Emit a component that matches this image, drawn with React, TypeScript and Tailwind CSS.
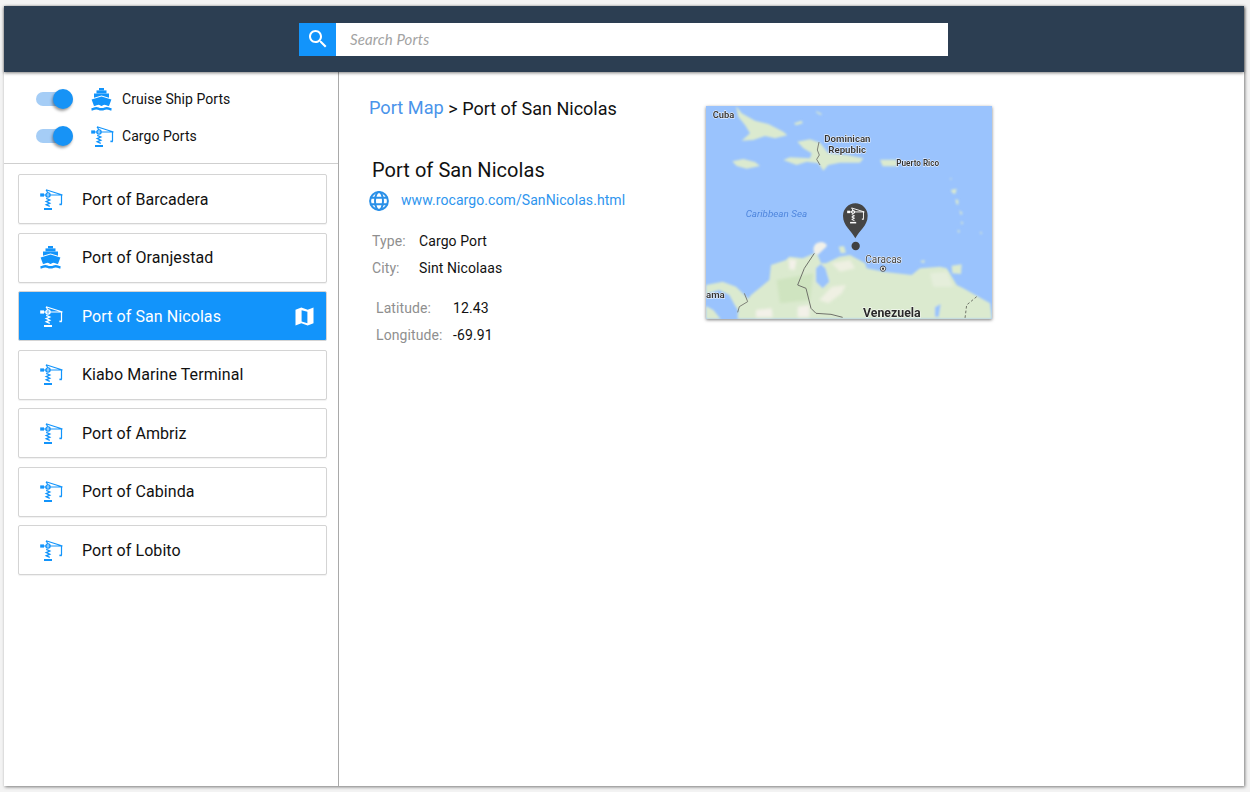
const PORTS = [
  { name: 'Port of Barcadera', type: 'cargo' },
  { name: 'Port of Oranjestad', type: 'cruise' },
  { name: 'Port of San Nicolas', type: 'cargo', active: true },
  { name: 'Kiabo Marine Terminal', type: 'cargo' },
  { name: 'Port of Ambriz', type: 'cargo' },
  { name: 'Port of Cabinda', type: 'cargo' },
  { name: 'Port of Lobito', type: 'cargo' },
];

function CraneShape({ stroke = 'currentColor' }: { stroke?: string }) {
  return (
    <g fill="none" stroke={stroke}>
      <path d="M2 6H22.5M6 0.8L22.5 6M8 4L6 0.8M21.5 6V15" strokeWidth="1.2" />
      <rect x="0.2" y="4.4" width="3.8" height="3.2" fill={stroke} stroke="none" />
      <circle cx="8" cy="6" r="2.1" strokeWidth="1.3" />
      <path d="M6.2 9.4L9.8 11L6.2 12.6L9.8 14.2L6.2 15.8L9.8 17.4" strokeWidth="1.3" />
      <path d="M4 20H12" strokeWidth="2" />
      <path d="M19.4 15.4H21.9" strokeWidth="1.6" />
    </g>
  );
}

function CraneIcon({ className = '' }: { className?: string }) {
  return (
    <svg viewBox="0 0 23 21" className={className}>
      <CraneShape />
    </svg>
  );
}

function ShipIcon({ className = '' }: { className?: string }) {
  return (
    <svg viewBox="0 0 21 23" className={className} fill="currentColor">
      <rect x="8" y="0" width="5" height="2.4" />
      <rect x="5.5" y="2.4" width="10" height="3" />
      <path d="M3 5.4H18V9.8L10.5 7.4L3 9.8Z" />
      <path d="M0.6 11.4L10.5 8.4L20.4 11.4L18 18C15.8 18 14.8 16.8 13.4 16.8C12.2 16.8 11.6 18 10.5 18C9.4 18 8.8 16.8 7.6 16.8C6.2 16.8 5.2 18 3 18Z" />
      <path d="M0.5 20C2.5 20 3 18.9 5.3 18.9C7.6 18.9 7.6 20 10.5 20C13.4 20 13.4 18.9 15.7 18.9C18 18.9 18.5 20 20.5 20V22.6C18.5 22.6 18 21.4 15.7 21.4C13.4 21.4 13.4 22.6 10.5 22.6C7.6 22.6 7.6 21.4 5.3 21.4C3 21.4 2.5 22.6 0.5 22.6Z" />
    </svg>
  );
}

function MapFoldIcon({ className = '' }: { className?: string }) {
  return (
    <svg viewBox="0 0 19 19" className={className} fill="currentColor" fillRule="evenodd">
      <path d="M0.5 2.8L6.3 0.6L12.7 2.8L18.5 0.6V16.2L12.7 18.4L6.3 16.2L0.5 18.4ZM6.6 3.2V14.4L12.4 16.2V4.8Z" />
    </svg>
  );
}

function GlobeIcon({ className = '' }: { className?: string }) {
  return (
    <svg viewBox="0 0 20 20" className={className} fill="none" stroke="currentColor" strokeWidth="2">
      <circle cx="10" cy="10" r="8.9" />
      <ellipse cx="10" cy="10" rx="4" ry="8.9" />
      <path d="M1.6 6.8H18.4M1.6 13.2H18.4" />
    </svg>
  );
}

function SearchIcon({ className = '' }: { className?: string }) {
  return (
    <svg viewBox="0 0 24 24" className={className} fill="currentColor">
      <path d="M15.5 14h-.79l-.28-.27C15.41 12.59 16 11.11 16 9.5 16 5.91 13.09 3 9.5 3S3 5.91 3 9.5 5.91 16 9.5 16c1.61 0 3.09-.59 4.23-1.57l.27.28v.79l5 4.99L20.49 19l-4.99-5zm-6 0C7.01 14 5 11.99 5 9.5S7.01 5 9.5 5 14 7.01 14 9.5 11.99 14 9.5 14z" />
    </svg>
  );
}

function Toggle() {
  return (
    <div className="relative w-[37px] h-[14px] rounded-full bg-[#a5cdf6]">
      <div className="absolute right-0 top-[-3px] w-[20px] h-[20px] rounded-full bg-[#1793f6] shadow-[-1px_2px_3px_rgba(0,0,0,0.4)]" />
    </div>
  );
}

// drawn in 3x coordinates, easier to read off the reference
function PortMap() {
  return (
    <svg viewBox="18 18 858 639" className="block w-[286px] h-[213px]">
      <defs>
        <filter id="soft" x="-5%" y="-5%" width="110%" height="110%">
          <feGaussianBlur stdDeviation="2.6" />
        </filter>
        <filter id="patch" x="-5%" y="-5%" width="110%" height="110%">
          <feGaussianBlur stdDeviation="5" />
        </filter>
        <filter id="softer" x="-5%" y="-5%" width="110%" height="110%">
          <feGaussianBlur stdDeviation="0.9" />
        </filter>
      </defs>
      <rect x="18" y="18" width="858" height="639" fill="#9ac3fd" />
      <g filter="url(#soft)">
        <g fill="#dbeacf">
          <path d="M108 18L125 40L165 62L205 72L250 95L262 106L225 115L195 108L160 120L125 122L150 100L135 75L115 50Z" />
          <path d="M97 184L130 177L165 186L180 198L140 206L110 198Z" />
          <path d="M292 125L330 118L360 128L385 160L440 165L490 175L480 188L420 188L385 195L370 212L355 190L320 185L290 195L250 180L270 172L330 175L335 160L310 145Z" />
          <path d="M540 179H590L592 199H548Z" />
          <path d="M282 70L305 62L308 70L288 76Z" />
          <path d="M348 33L366 42L362 45L350 38Z" />
          <path d="M752 270L770 266L766 282L758 280ZM766 298L775 300L775 314L769 312ZM778 330L788 340L782 345ZM783 364L790 368L785 374ZM772 390L780 392L776 400ZM840 394L847 400L842 403ZM750 234L756 236L752 240ZM660 484L674 480L672 490ZM755 497L785 493L783 522L757 520Z" />
          <path d="M18 555L68 545L108 560L128 580L153 605L143 615L118 637L104 615L88 585L58 570L23 580L18 600Z" />
          <path d="M18 618L40 630L62 657H18Z" />
          <path d="M113 640L153 585L208 540L213 495L258 480L268 470L308 475L343 460L353 465L363 490L378 490L418 470L450 465L495 490L500 505L550 515L635 525L660 505L720 500L740 505L770 555L790 565L870 610L876 657H113Z" />
          <path d="M416 440L432 438L438 458L422 460Z" />
        </g>
        <path d="M343 460C336 440 345 428 363 426C378 428 384 436 378 441L353 465Z" fill="#f2f1e9" />
        <path d="M348 505L362 492L376 505L388 545L368 565L348 545Z" fill="#9ac3fd" />
        <path d="M705 622L722 612L716 650L705 650Z" fill="#9ac3fd" />
      </g>
      <g filter="url(#patch)">
        <path d="M266 478L290 480L284 510L268 508Z" fill="#f3f1e9" />
        <path d="M168 630L215 625L218 652H168Z" fill="#f3f1e9" />
        <path d="M293 620L328 615L328 652H293Z" fill="#f3f1e9" />
        <path d="M358 600L395 560L438 555L425 580L385 610Z" fill="#eff0e3" />
        <path d="M395 490L450 480L465 505L420 515Z" fill="#eef0e2" />
        <path d="M230 540L340 520L330 600L240 610Z" fill="#cfe4c0" />
        <path d="M690 520L740 515L760 560L700 560Z" fill="#e5eedb" />
      </g>
      <g fill="none" strokeLinejoin="round" filter="url(#softer)">
        <path d="M343 460L313 505L293 555L318 565L333 625L348 640L393 643L428 652" stroke="#6f716a" strokeWidth="3" />
        <path d="M133 580L143 605L118 620L113 637" stroke="#6f716a" strokeWidth="2.6" />
        <path d="M357 126L352 150L358 165L350 178L360 195" stroke="#6f716a" strokeWidth="2.6" />
        <path d="M830 590L800 615L795 655" stroke="#55574f" strokeWidth="2.4" strokeDasharray="8 6" />
      </g>
      <g fontFamily="Roboto, sans-serif" filter="url(#softer)" stroke="#ffffff" strokeWidth="2.5" paintOrder="stroke">
        <text x="38" y="54" fontSize="28" fontWeight="600" fill="#333">Cuba</text>
        <text x="373" y="126" fontSize="29" fontWeight="600" fill="#333">Dominican</text>
        <text x="385" y="159" fontSize="29" fontWeight="600" fill="#333">Republic</text>
        <text x="589" y="197" fontSize="24.5" fontWeight="600" fill="#333">Puerto Rico</text>
        <text x="137" y="351" fontSize="29.5" fontStyle="italic" fill="#4f86dd" stroke="none">Caribbean Sea</text>
        <text x="496" y="489" fontSize="30" fill="#444">Caracas</text>
        <text x="18" y="595" fontSize="29" fontWeight="600" fill="#333">ama</text>
        <text x="489" y="651" fontSize="37" fontWeight="700" fill="#2a2a2a">Venezuela</text>
      </g>
      <g filter="url(#softer)">
        <circle cx="549" cy="506" r="8" fill="#fff" stroke="#333" strokeWidth="2.5" />
        <circle cx="549" cy="506" r="3.5" fill="#333" />
        <path d="M466 415C455 392 429 378 429 347A37 37 0 0 1 503 347C503 378 477 392 466 415Z" fill="#444444" />
        <circle cx="467" cy="438" r="12.5" fill="#3f3f3f" />
        <g transform="translate(441 322) scale(2.3)">
          <CraneShape stroke="#ffffff" />
        </g>
      </g>
    </svg>
  );
}

export default function App() {
  return (
    <div className="w-[1250px] h-[792px] overflow-hidden bg-[#f3f3f3] pl-[4px] pr-[6px] pt-[6px] pb-[6px] font-['Roboto',sans-serif] text-[#111]">
      <div className="h-[780px] flex flex-col bg-white shadow-[1px_1px_3px_rgba(0,0,0,0.5)]">
        <header className="relative z-10 h-[66px] shrink-0 bg-[#2c3e52] shadow-[0_1px_3px_rgba(0,0,0,0.5)] flex items-center pl-[295px]">
          <div className="w-[37px] h-[33px] bg-[#1294fb] flex items-center justify-center text-white">
            <SearchIcon className="w-[24px] h-[24px]" />
          </div>
          <div className="w-[612px] h-[33px] bg-white flex items-center pl-[14px] font-['Lato',sans-serif] italic text-[15px] tracking-[0.12px] text-[#a3a3a3]">
            Search Ports
          </div>
        </header>

        <div className="flex-1 flex min-h-0">
          <aside className="w-[335px] shrink-0 border-r border-[#a9a9a9]">
            <div className="h-[92px] border-b border-[#cfcfcf] pl-[32px] pt-[16px] flex flex-col gap-[15px]">
              <div className="h-[22px] flex items-center">
                <Toggle />
                <ShipIcon className="ml-[18px] w-[21px] h-[23px] text-[#1294fb]" />
                <span className="ml-[10px] text-[14px] tracking-[0.05px]">Cruise Ship Ports</span>
              </div>
              <div className="h-[22px] flex items-center">
                <Toggle />
                <CraneIcon className="ml-[18px] w-[23px] h-[21px] text-[#1294fb]" />
                <span className="ml-[8px] text-[14px] tracking-[0.05px]">Cargo Ports</span>
              </div>
            </div>
            <div className="pl-[14px] pt-[10px] w-[323px] flex flex-col gap-[8.5px]">
              {PORTS.map((port) =>
                port.active ? (
                  <div key={port.name} className="h-[50px] flex items-center rounded-[2px] bg-[#1294fb] border border-[#d4d4d4] pl-[21px] pr-[12px] text-white">
                    <CraneIcon className="w-[23px] h-[21px]" />
                    <span className="ml-[19px] pt-[1px] text-[16px] tracking-[0.08px] flex-1">{port.name}</span>
                    <MapFoldIcon className="w-[19px] h-[19px]" />
                  </div>
                ) : (
                  <div key={port.name} className="h-[50px] flex items-center rounded-[2px] bg-white border border-[#d4d4d4] shadow-[0_1px_1px_rgba(0,0,0,0.06)] pl-[21px] pr-[12px]">
                    {port.type === 'cargo' ? (
                      <CraneIcon className="w-[23px] h-[21px] text-[#1294fb]" />
                    ) : (
                      <ShipIcon className="w-[21px] h-[23px] mr-[2px] text-[#1294fb]" />
                    )}
                    <span className="ml-[19px] pt-[1px] text-[16px] tracking-[0.08px]">{port.name}</span>
                  </div>
                ),
              )}
            </div>
          </aside>

          <main className="flex-1 flex pl-[30px] pt-[24px]">
            <div className="w-[337px]">
              <div className="h-[24px] flex items-center text-[18px] whitespace-pre">
                <span className="text-[#4a94ea] text-[18.2px]">Port Map</span>
                <span> &gt; </span>
                <span>Port of San Nicolas</span>
              </div>
              <h1 className="mt-[37px] ml-[3px] text-[20px] tracking-[0.05px] leading-[26px]">Port of San Nicolas</h1>
              <div className="mt-[7px] flex items-center">
                <GlobeIcon className="w-[20px] h-[20px] text-[#2a90e8]" />
                <span className="ml-[12px] text-[14px] tracking-[0.08px] text-[#2e95ee]">www.rocargo.com/SanNicolas.html</span>
              </div>
              <div className="mt-[21px] ml-[3px] text-[14px] tracking-[0.1px] flex flex-col gap-[9px]">
                <div className="h-[18px] flex items-center">
                  <span className="w-[47px] text-[#8f8f8f]">Type:</span>
                  <span>Cargo Port</span>
                </div>
                <div className="h-[18px] flex items-center">
                  <span className="w-[47px] text-[#8f8f8f]">City:</span>
                  <span>Sint Nicolaas</span>
                </div>
              </div>
              <div className="mt-[22px] ml-[7px] text-[14px] tracking-[0.1px] flex flex-col gap-[9px]">
                <div className="h-[18px] flex items-center">
                  <span className="w-[77px] text-[#8f8f8f]">Latitude:</span>
                  <span>12.43</span>
                </div>
                <div className="h-[18px] flex items-center">
                  <span className="w-[77px] text-[#8f8f8f]">Longitude:</span>
                  <span>-69.91</span>
                </div>
              </div>
            </div>
            <div className="self-start mt-[10px] shadow-[0_1px_3px_rgba(0,0,0,0.5)]">
              <PortMap />
            </div>
          </main>
        </div>
      </div>
    </div>
  );
}
